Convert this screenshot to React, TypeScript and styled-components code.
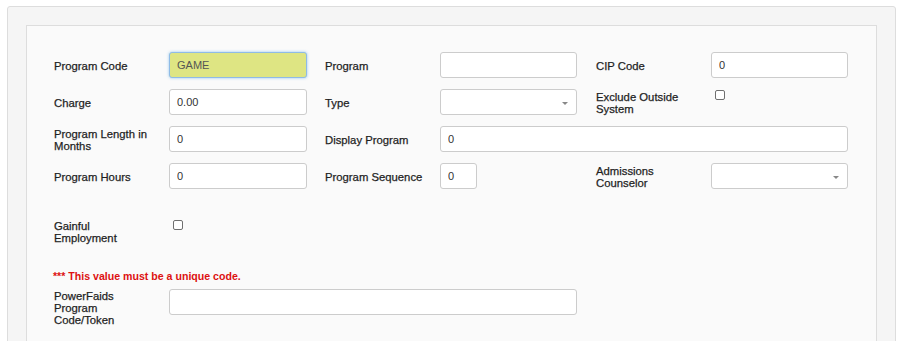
import React from 'react';
import styled, { createGlobalStyle } from 'styled-components';

const GlobalStyle = createGlobalStyle`
  html, body {
    margin: 0;
    padding: 0;
    background: #ffffff;
    font-family: "Liberation Sans", Arial, sans-serif;
  }
`;

const Page = styled.div`
  padding: 6px 6px 0 7px;
  height: 341px;
  box-sizing: border-box;
  overflow: hidden;
`;

const OuterPanel = styled.div`
  background: #f5f5f5;
  border: 1px solid #dddddd;
  border-radius: 3px;
  padding: 18px 18px 0;
  height: 400px;
`;

const InnerPanel = styled.div`
  background: #fafafa;
  border: 1px solid #dddddd;
  padding: 26px 27px 0;
  height: 380px;
`;

const Grid = styled.div<{ $mt?: number; $align?: string }>`
  display: grid;
  grid-template-columns: 115px 138px 18px 115px 137px 19px 115px 137px;
  grid-auto-rows: minmax(26px, auto);
  row-gap: 11px;
  align-items: ${({ $align }) => $align || 'center'};
  margin-top: ${({ $mt }) => ($mt || 0)}px;
`;

const Label = styled.label<{ $col?: number }>`
  grid-column: ${({ $col }) => $col || 1};
  padding-top: 1px;
  font-size: 11.3px;
  line-height: 12px;
  font-weight: normal;
  color: #1f1f1f;
  -webkit-text-stroke: 0.25px #1f1f1f;
`;

const Cell = styled.div<{ $col: number; $span?: number; $self?: string }>`
  grid-column: ${({ $col, $span }) => `${$col} / span ${$span || 1}`};
  align-self: ${({ $self }) => $self || 'auto'};
  display: flex;
`;

const TextInput = styled.input<{ $w?: number; $highlight?: boolean }>`
  box-sizing: border-box;
  width: ${({ $w }) => ($w ? `${$w}px` : '100%')};
  height: 26px;
  padding: 0 7px;
  font-family: "Liberation Sans", Arial, sans-serif;
  font-size: 11px;
  color: ${({ $highlight }) => ($highlight ? '#555555' : '#333333')};
  background: ${({ $highlight }) => ($highlight ? '#dee583' : '#ffffff')};
  border: 1px solid ${({ $highlight }) => ($highlight ? '#8fbbe6' : '#cccccc')};
  border-radius: 3px;
  box-shadow: ${({ $highlight }) => ($highlight ? '0 0 3px rgba(102, 175, 233, 0.7)' : 'none')};
  outline: none;
`;

const SelectBox = styled.div`
  position: relative;
  box-sizing: border-box;
  width: 100%;
  height: 26px;
  background: #ffffff;
  border: 1px solid #cccccc;
  border-radius: 3px;

  &::after {
    content: '';
    position: absolute;
    right: 8px;
    top: 12px;
    border-left: 3px solid transparent;
    border-right: 3px solid transparent;
    border-top: 3px solid #888888;
  }
`;

const Check = styled.input.attrs({ type: 'checkbox' })`
  appearance: none;
  box-sizing: border-box;
  width: 10px;
  height: 10px;
  margin: 1px 0 0 4px;
  background: #ffffff;
  border: 1px solid #6f6f6f;
  border-radius: 2px;
`;

const Note = styled.div`
  margin: 25px 0 7px -1px;
  font-size: 10.6px;
  line-height: 12px;
  font-weight: bold;
  color: #dd1111;
`;

export default function App() {
  return (
    <Page>
      <GlobalStyle />
      <OuterPanel>
        <InnerPanel>
          <Grid>
            <Label>Program Code</Label>
            <Cell $col={2}><TextInput $highlight defaultValue="GAME" /></Cell>
            <Label $col={4}>Program</Label>
            <Cell $col={5}><TextInput /></Cell>
            <Label $col={7}>CIP Code</Label>
            <Cell $col={8}><TextInput defaultValue="0" /></Cell>

            <Label>Charge</Label>
            <Cell $col={2}><TextInput defaultValue="0.00" /></Cell>
            <Label $col={4}>Type</Label>
            <Cell $col={5}><SelectBox /></Cell>
            <Label $col={7}>Exclude Outside<br />System</Label>
            <Cell $col={8} $self="start"><Check /></Cell>

            <Label>Program Length in<br />Months</Label>
            <Cell $col={2}><TextInput defaultValue="0" /></Cell>
            <Label $col={4}>Display Program</Label>
            <Cell $col={5} $span={4}><TextInput defaultValue="0" /></Cell>

            <Label>Program Hours</Label>
            <Cell $col={2}><TextInput defaultValue="0" /></Cell>
            <Label $col={4}>Program Sequence</Label>
            <Cell $col={5}><TextInput $w={37} defaultValue="0" /></Cell>
            <Label $col={7}>Admissions<br />Counselor</Label>
            <Cell $col={8}><SelectBox /></Cell>
          </Grid>

          <Grid $mt={30} $align="start">
            <Label>Gainful<br />Employment</Label>
            <Cell $col={2}><Check /></Cell>
          </Grid>

          <Note>*** This value must be a unique code.</Note>

          <Grid $align="start">
            <Label>PowerFaids<br />Program<br />Code/Token</Label>
            <Cell $col={2} $span={4}><TextInput /></Cell>
          </Grid>
        </InnerPanel>
      </OuterPanel>
    </Page>
  );
}
